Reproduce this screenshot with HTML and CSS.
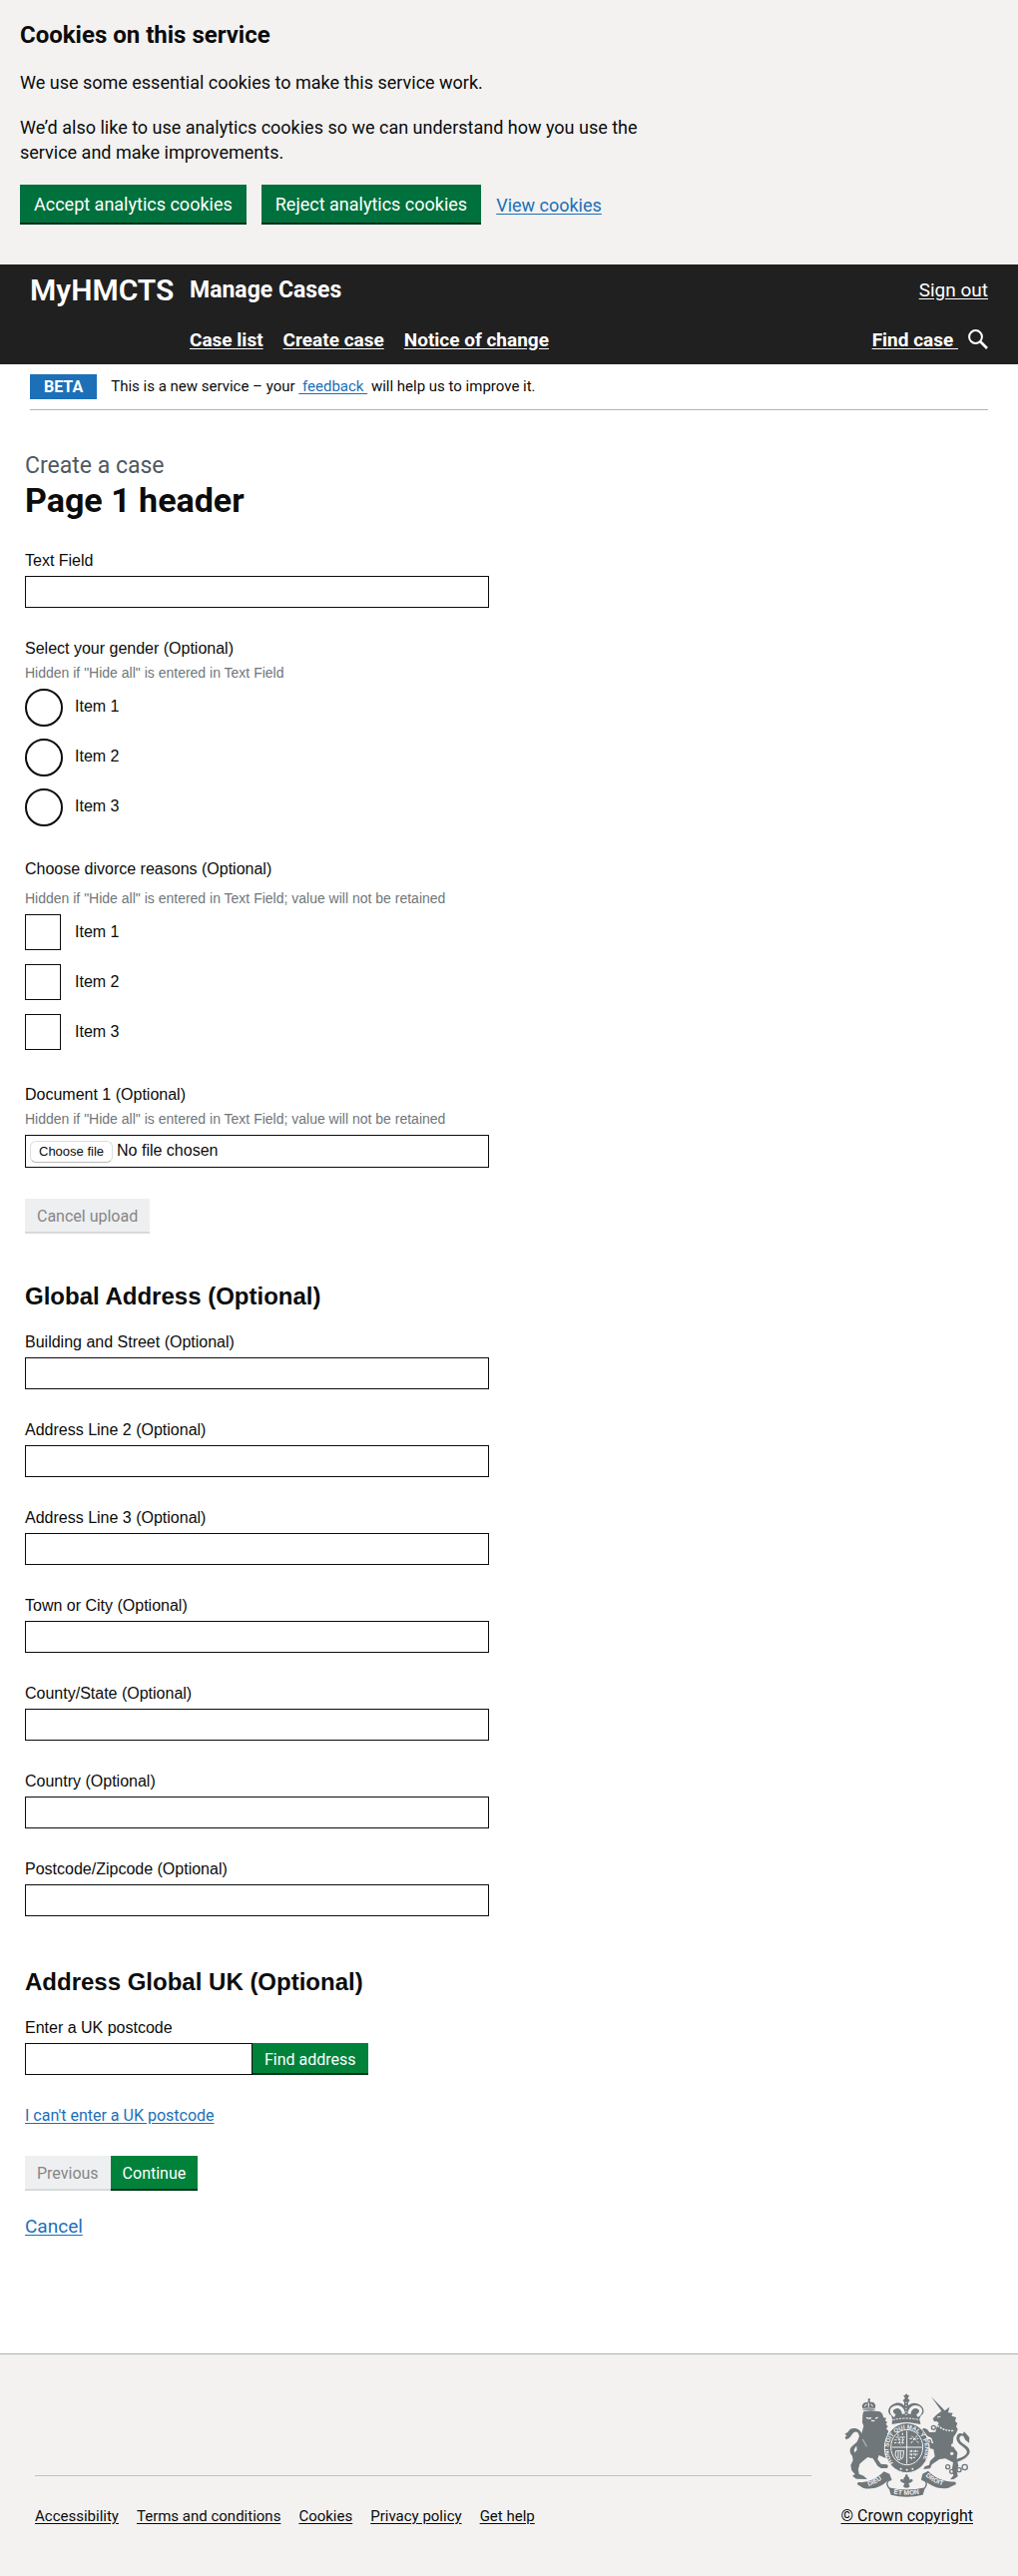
FILE: index.html
```
<!DOCTYPE html>
<html lang="en">
<head>
<meta charset="utf-8">
<meta name="viewport" content="width=device-width, initial-scale=1">
<title>Create a case - Manage Cases</title>
<link rel="stylesheet" href="styles.css">
</head>
<body>
<section class="cookie-banner" aria-label="Cookies on this service">
  <h2 class="cookie-title">Cookies on this service</h2>
  <p>We use some essential cookies to make this service work.</p>
  <p>We’d also like to use analytics cookies so we can understand how you use the service and make improvements.</p>
  <div class="cookie-actions">
    <button type="button" class="cookie-button">Accept analytics cookies</button>
    <button type="button" class="cookie-button">Reject analytics cookies</button>
    <a class="link" href="#cookies">View cookies</a>
  </div>
</section>

<header class="header">
  <div class="header-row">
    <a class="logo" href="#home">MyHMCTS</a>
    <a class="service" href="#cases">Manage Cases</a>
    <a class="header-link push" href="#sign-out">Sign out</a>
  </div>
  <nav class="header-row nav" aria-label="Primary">
    <a class="header-link" href="#list">Case list</a>
    <a class="header-link" href="#create">Create case</a>
    <a class="header-link" href="#notice">Notice of change</a>
    <div class="find push">
      <a class="header-link find-link" href="#find">Find case </a>
      <svg width="20" height="20" viewBox="0 0 20 20" aria-hidden="true"><circle cx="7.5" cy="7.5" r="6.4" fill="none" stroke="#fff" stroke-width="2"/><path d="M12 12l7 7" stroke="#fff" stroke-width="2.6"/></svg>
    </div>
  </nav>
</header>

<div class="phase">
  <strong class="tag">BETA</strong>
  <span>This is a new service – your <a class="link" href="#feedback">&nbsp;feedback&nbsp;</a> will help us to improve it.</span>
</div>

<main class="main">
  <span class="caption">Create a case</span>
  <h1>Page 1 header</h1>
  <form>
    <div class="field">
      <label for="text">Text Field</label>
      <input class="text" id="text" type="text">
    </div>

    <fieldset class="options">
      <legend>Select your gender (Optional)</legend>
      <p class="hint">Hidden if "Hide all" is entered in Text Field</p>
      <div class="option"><input class="radio" type="radio" name="gender" id="g1"><label for="g1">Item 1</label></div>
      <div class="option"><input class="radio" type="radio" name="gender" id="g2"><label for="g2">Item 2</label></div>
      <div class="option"><input class="radio" type="radio" name="gender" id="g3"><label for="g3">Item 3</label></div>
    </fieldset>

    <fieldset class="options">
      <legend class="spaced">Choose divorce reasons (Optional)</legend>
      <p class="hint">Hidden if "Hide all" is entered in Text Field; value will not be retained</p>
      <div class="option"><input class="check" type="checkbox" id="r1"><label for="r1">Item 1</label></div>
      <div class="option"><input class="check" type="checkbox" id="r2"><label for="r2">Item 2</label></div>
      <div class="option"><input class="check" type="checkbox" id="r3"><label for="r3">Item 3</label></div>
    </fieldset>

    <div class="field">
      <label class="hinted" for="doc">Document 1 (Optional)</label>
      <p class="hint">Hidden if "Hide all" is entered in Text Field; value will not be retained</p>
      <div class="file">
        <input class="visually-hidden" type="file" id="doc">
        <label class="file-button" for="doc">Choose file</label>
        <span>No file chosen</span>
      </div>
    </div>
    <button type="button" class="button disabled" disabled>Cancel upload</button>

    <h2 class="section-title">Global Address (Optional)</h2>
    <div class="field"><label for="a1">Building and Street (Optional)</label><input class="text" id="a1" type="text"></div>
    <div class="field"><label for="a2">Address Line 2 (Optional)</label><input class="text" id="a2" type="text"></div>
    <div class="field"><label for="a3">Address Line 3 (Optional)</label><input class="text" id="a3" type="text"></div>
    <div class="field"><label for="a4">Town or City (Optional)</label><input class="text" id="a4" type="text"></div>
    <div class="field"><label for="a5">County/State (Optional)</label><input class="text" id="a5" type="text"></div>
    <div class="field"><label for="a6">Country (Optional)</label><input class="text" id="a6" type="text"></div>
    <div class="field"><label for="a7">Postcode/Zipcode (Optional)</label><input class="text" id="a7" type="text"></div>

    <h2 class="section-title">Address Global UK (Optional)</h2>
    <div class="field">
      <label for="uk">Enter a UK postcode</label>
      <div class="lookup">
        <input class="text postcode" id="uk" type="text">
        <button type="button" class="button find-address">Find address</button>
      </div>
    </div>
    <a class="link manual" href="#manual">I can't enter a UK postcode</a>
    <div class="actions">
      <button type="button" class="button disabled" disabled>Previous</button>
      <button type="submit" class="button">Continue</button>
    </div>
    <a class="link cancel" href="#cancel">Cancel</a>
  </form>
</main>

<footer class="footer">
  <div class="footer-main">
    <ul class="footer-links">
      <li><a href="#accessibility">Accessibility</a></li>
      <li><a href="#terms">Terms and conditions</a></li>
      <li><a href="#cookies">Cookies</a></li>
      <li><a href="#privacy">Privacy policy</a></li>
      <li><a href="#help">Get help</a></li>
    </ul>
  </div>
  <a class="copyright" href="#copyright">
    <svg class="crest" width="126" height="104" viewBox="48 54 378 312" aria-hidden="true">
      <defs>
        <path id="garter" d="M195 263A55 61 0 1 1 277 263"/>
        <path id="left-scroll" d="M121 333Q150 324 174 301"/>
        <path id="mid-scroll" d="M190 354Q235 364 282 354"/>
        <path id="right-scroll" d="M292 302Q318 327 354 332"/>
      </defs>
      <g fill="#6f777b">
        <!-- lion -->
        <path d="M103 118L106 108 128 106 155 109 162 115 166 127 174 128 171 136 177 141 173 146 179 154 174 160 181 168 177 176 184 186 180 198 174 206 176 222 182 240 180 252 166 246 152 240 148 252 158 266 176 268 180 272 177 279 158 279 148 272 134 250 118 246 106 256 94 266 90 282 92 296 106 302 117 312 84 311 72 302 80 297 70 286 67 270 74 256 72 240 86 224 84 206 91 188 100 174 106 152 102 142Z"/>
        <path d="M78 247C64 238 60 222 72 212 90 198 96 190 91 176 86 165 75 169 69 181L62 189 53 193 50 187 55 181 49 176 58 171 65 162C80 154 98 162 101 178 104 198 88 208 81 217 73 228 80 234 88 238Z"/>
        <path d="M104 104L101 90 108 82 117 81 122 74 127 80 136 81 142 90 139 104Z"/>
        <path d="M119 70h7v6h-7z"/>
        <!-- royal crown -->
        <path d="M192 131L189 121C176 115 178 96 193 88 207 79 221 82 228 91L228 81 224 75 230 70 229 65 225 61 231 59 231 56h6l1 3 6 2-4 4-1 5 6 5-5 6v10C248 82 263 79 277 90 290 100 289 116 278 121L274 131 277 147Q234 137 191 147Z"/>
        <!-- unicorn -->
        <path d="M309 64L350 106 364 95 360 112 374 113 370 122 384 126 381 138 388 144 384 154 389 162 384 174 376 186 374 204 378 218 388 232 386 250 391 272 386 284 389 304 377 312 366 313 376 301 372 280 375 262 352 250 334 252 311 268 306 280 286 282 290 274 303 269 306 257 320 244 316 222 306 220 295 208 286 210 286 201 296 194 306 202 316 205 310 188 298 182 288 170 283 177 279 166 287 158 297 162 304 171 322 170 326 154 332 144 326 138 318 139 314 130 326 118 340 107Z"/>
        <path d="M385 252C401 246 419 240 416 227 410 214 386 208 385 190 386 173 397 172 404 176L408 169 415 176 424 187 423 203 412 194 406 183C397 179 392 186 395 194 399 206 426 211 425 230 423 244 403 255 387 260Z"/>
        <!-- scrolls -->
        <path d="M90 321C120 324 147 310 167 289L184 296 190 313 176 318C158 337 128 345 104 338L86 327Z"/>
        <path d="M382 320C346 320 318 307 300 287L283 296 279 313 292 318C312 336 337 343 361 338L384 327Z"/>
        <path d="M181 337Q234 350 291 337L284 359Q234 371 188 359Z"/>
        <!-- garter -->
        <ellipse cx="236" cy="218" rx="67" ry="75" stroke="#f3f2f1" stroke-width="3"/>
      </g>
      <g fill="none" stroke="#6f777b" stroke-width="4">
        <path d="M190 313Q167 318 183 340"/><path d="M280 313Q304 318 289 340"/>
        <circle cx="359" cy="275" r="6"/><circle cx="371" cy="289" r="6"/><circle cx="393" cy="284" r="6"/><circle cx="410" cy="276" r="8"/><circle cx="316" cy="157" r="6"/><circle cx="303" cy="199" r="5"/>
      </g>
      <path d="M232 298h6l1 6q8 6 4 15 1-9 9-7 5 6-4 10l-7 3 4 9q-10 9-20 0l4-9-7-3q-9-4-4-10 8-2 9 7-4-9 4-15z" fill="#6f777b"/>
      <g fill="none" stroke="#f3f2f1">
        <path d="M102 101Q122 96 142 101" stroke-width="2"/><path d="M109 94q2-7 7-7M121 95v-13M133 94q-1-7-6-7" stroke-width="3"/>
        <path d="M114 127l10 3 5-3M141 130l8-4M129 136l10 1" stroke-width="4"/>
        <path d="M200 122C186 113 187 101 200 96 213 92 225 99 226 116M267 122C281 112 281 101 269 96 256 92 244 99 243 116" stroke-width="9"/>
        <path d="M193 134Q234 124 275 134" stroke-width="3" stroke-dasharray="7 3"/><path d="M234 80v40" stroke-width="3" stroke-dasharray="4 5"/>
        <path d="M328 151q23 18 51 15" stroke-width="4" stroke-dasharray="6 3"/>
        <path d="M327 126l10-2" stroke-width="3"/>
        <path d="M103 192l12 22" stroke-width="2"/>
        <!-- quartered shield -->
        <ellipse cx="236" cy="216" rx="48" ry="53" stroke-width="3"/>
        <path d="M236 166v100M191 216h90" stroke-width="3"/>
        <path d="M203 186h27M199 194h30M198 203h30M209 176l8 34M223 173v34" stroke-width="3" stroke-dasharray="7 4"/>
        <path d="M250 182l22 22M248 204l20-24M244 190h27" stroke-width="3" stroke-dasharray="8 3"/>
        <path d="M203 227h24l-3 21-14 7-9-16zM210 229v20M217 229v20" stroke-width="3"/>
        <path d="M243 228h27M243 237h26M243 247h21M250 224v29M262 224v22" stroke-width="3" stroke-dasharray="7 4"/>
      </g>
      <g fill="#f3f2f1"><circle cx="218" cy="281" r="3"/><circle cx="236" cy="284" r="3"/><circle cx="253" cy="281" r="3"/><circle cx="374" cy="210" r="5"/><circle cx="371" cy="235" r="5"/></g>
      <g class="motto">
        <text font-size="18"><textPath href="#garter">HONI SOIT QUI MAL Y PENSE</textPath></text>
        <text font-size="19"><textPath href="#left-scroll">DIEU</textPath></text>
        <text font-size="20"><textPath href="#mid-scroll" startOffset="6">ET MON</textPath></text>
        <text font-size="19"><textPath href="#right-scroll">DROIT</textPath></text>
      </g>
    </svg>
    <span>© Crown copyright</span>
  </a>
</footer>
</body>
</html>
```
FILE: styles.css
```
* { box-sizing: border-box; }
body {
  margin: 0;
  background: #fff;
  color: #0b0c0c;
  font: 18px/25px Roboto, sans-serif;
}
p, h1, h2, ul { margin: 0; padding: 0; }
button, input { margin: 0; font: inherit; border-radius: 0; }
.link { color: #1d70b8; text-underline-offset: 2px; }

.cookie-banner { padding: 20px 20px 40px; background: #f3f2f1; }
.cookie-title { font-size: 24px; line-height: 30px; }
.cookie-banner p { max-width: 650px; margin-top: 20px; }
.cookie-actions { display: flex; flex-wrap: wrap; align-items: center; gap: 15px; margin-top: 20px; }
.cookie-button {
  height: 40px;
  padding: 0 14px;
  border: 0;
  border-bottom: 2px solid #002d18;
  background: #00703c;
  color: #fff;
}

.header { padding: 0 30px; background: #202020; color: #fff; font-size: 19px; }
.header a { color: #fff; }
.header-row { display: flex; align-items: center; min-height: 50px; }
.logo { min-width: 160px; font-size: 30px; font-weight: 600; text-decoration: none; }
.service { font-size: 23px; font-weight: 700; text-decoration: none; }
.header-link { text-underline-offset: 2px; }
.push { margin-left: auto; }
.nav { gap: 20px; padding-left: 160px; font-weight: 700; }
.find { display: flex; align-items: center; gap: 10px; }
.find-link { white-space: pre; }

.phase {
  display: flex;
  align-items: center;
  gap: 14px;
  margin: 0 30px;
  padding: 10px 0;
  border-bottom: 1px solid #b1b4b6;
  font-size: 15px;
}
.tag { padding: 0 14px; background: #1d70b8; color: #fff; font-size: 16px; }

.main { padding: 41px 25px 115px; }
.caption { display: block; color: #505a5f; font-size: 23px; line-height: 30px; }
h1 { margin-bottom: 32px; font-size: 34px; line-height: 38px; }

form { font: 16px/20px "Liberation Sans", Arial, sans-serif; }
.field { margin-bottom: 31px; }
.field > label { display: block; margin-bottom: 5px; }
.text {
  display: block;
  width: 100%;
  max-width: 465px;
  height: 32px;
  padding: 4px;
  border: 1px solid #0b0c0c;
  background: #fff;
}
.hint { margin-bottom: 6px; color: #6f777b; font-size: 14px; }
.field > .hinted { margin-bottom: 4px; }
.options { display: grid; gap: 12px; min-width: 0; margin: 0 0 33px; padding: 0; border: 0; }
.options legend { margin-bottom: 4px; padding: 0; }
.options .spaced { margin-bottom: 9px; }
.options .hint { margin-bottom: -6px; }
.option { display: flex; align-items: center; gap: 12px; height: 38px; }
.option label { padding-bottom: 3px; }
.radio, .check { flex: none; appearance: none; width: 38px; height: 38px; background: #fff; }
.radio { border: 2px solid #0b0c0c; border-radius: 50%; }
.check { align-self: flex-start; width: 36px; height: 36px; margin-right: 2px; border: 1px solid #0b0c0c; }
.radio:checked { box-shadow: inset 0 0 0 7px #fff; background: #0b0c0c; }
.check:checked { box-shadow: inset 0 0 0 8px #fff; background: #0b0c0c; }

.file {
  display: flex;
  align-items: center;
  gap: 4px;
  max-width: 465px;
  height: 33px;
  padding: 0 4px;
  border: 1px solid #0b0c0c;
}
.file span { padding-bottom: 2px; }
.file-button {
  padding: 0 8px;
  border: 1px solid #ddd;
  border-bottom-color: #bbb;
  border-radius: 6px;
  font-size: 13px;
}
.visually-hidden { position: absolute; width: 1px; height: 1px; overflow: hidden; clip-path: inset(50%); }

.button {
  height: 35px;
  padding: 2px 12px 0;
  border: 0;
  border-bottom: 2px solid #003618;
  background: #00823b;
  color: #fff;
  font-family: Roboto, sans-serif;
}
.disabled { border-color: #d8d9db; background: #eeeff1; color: #868686; }
.section-title { margin-bottom: 21px; padding-top: 48px; font-size: 24px; line-height: 30px; }
.field + .section-title { padding-top: 20px; }
.lookup { display: flex; }
.postcode { max-width: 228px; }
.find-address { height: 32px; padding-top: 4px; }
.manual, .cancel { display: table; font-family: Roboto, sans-serif; }
.actions { display: flex; margin: 30px 0 23px; }
.cancel { font-size: 19px; line-height: 25px; }

.footer {
  display: flex;
  align-items: flex-end;
  gap: 30px;
  padding: 39px 45px 50px 35px;
  border-top: 1px solid #a9b1b5;
  background: #f3f2f1;
  font-size: 15px;
  line-height: 20px;
}
.footer-main { flex: 1; border-top: 1px solid #bfc1c3; padding-top: 30px; }
.footer-links { display: flex; flex-wrap: wrap; gap: 0 18px; list-style: none; }
.footer a { color: #0b0c0c; text-underline-offset: 2px; }
.copyright { display: grid; justify-items: center; gap: 9px; font-size: 16px; }
.crest { display: block; }
.motto { fill: #f3f2f1; font-family: "Liberation Sans", Arial, sans-serif; font-weight: 700; }
```
